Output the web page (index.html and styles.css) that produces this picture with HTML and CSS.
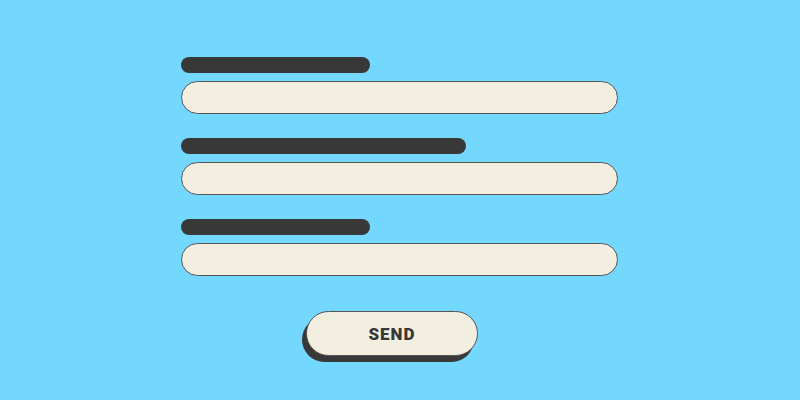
FILE: index.html
```html
<!DOCTYPE html>
<html>
<head>
<meta charset="utf-8">
<link rel="stylesheet" href="styles.css">
</head>
<body>
<form class="form">
  <div class="field">
    <div class="label label-short"></div>
    <div class="input"></div>
  </div>
  <div class="field">
    <div class="label label-long"></div>
    <div class="input"></div>
  </div>
  <div class="field">
    <div class="label label-short"></div>
    <div class="input"></div>
  </div>
  <div class="actions">
    <button type="button" class="send">SEND</button>
  </div>
</form>
</body>
</html>
```
FILE: styles.css
```css
html, body {
  margin: 0;
  padding: 0;
  background: #74d7fd;
  width: 800px;
  height: 400px;
  overflow: hidden;
}
.form {
  width: 437px;
  margin: 0 0 0 181px;
  padding-top: 57px;
  display: flex;
  flex-direction: column;
  gap: 24px;
}
.field {
  display: flex;
  flex-direction: column;
  gap: 8px;
}
.label {
  height: 16px;
  border-radius: 8px;
  background: #383838;
}
.label-short { width: 189px; }
.label-long { width: 285px; }
.input {
  box-sizing: border-box;
  height: 33px;
  border: 1px solid #555555;
  border-radius: 17px;
  background: #f3efe0;
}
.actions {
  display: flex;
  padding-left: 125px;
  padding-top: 11px;
}
.send {
  box-sizing: border-box;
  width: 172px;
  height: 45px;
  border: 1px solid #555555;
  border-radius: 23px;
  background: #f3efe0;
  box-shadow: -4px 6px 0 #383838;
  font-family: Roboto, "Liberation Sans", sans-serif;
  font-weight: 900;
  font-size: 17px;
  letter-spacing: 1px;
  color: #383838;
  padding: 0;
}
```
